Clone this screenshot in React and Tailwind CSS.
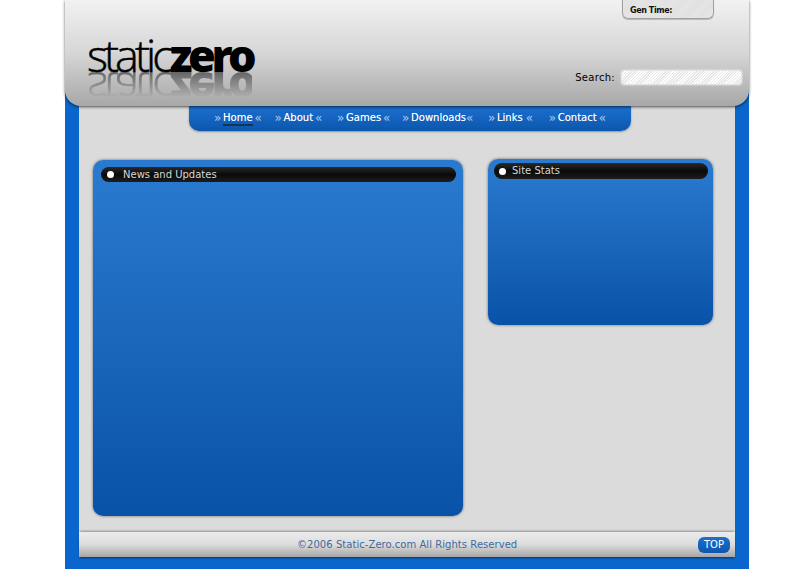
const navItems = [
  { label: "Home", cls: "ml-[25px]", gap: "ml-[2px]", active: true },
  { label: "About", cls: "ml-[12px]", gap: "ml-[2px]" },
  { label: "Games", cls: "ml-[14px]", gap: "ml-[2px]" },
  { label: "Downloads", cls: "ml-[11px]", gap: "ml-0" },
  { label: "Links", cls: "ml-[14px]", gap: "ml-[3px]" },
  { label: "Contact", cls: "ml-[15px]", gap: "ml-[2px]" },
];

function Logo({ className = "" }) {
  return (
    <div className={`flex h-[34px] items-end font-['Open_Sans',sans-serif] text-[45px] leading-[34px] text-black ${className}`}>
      <span className="font-light tracking-[-3.95px] [-webkit-text-stroke:0.5px_#000000]">static</span>
      <span className="font-extrabold tracking-[-4.5px]">zero</span>
    </div>
  );
}

function PanelTitle({ title, cls, textCls }) {
  return (
    <div className={`flex items-center rounded-full bg-gradient-to-b from-[#2a2a2a] via-[#0a0a0a] to-[#1c1c1c] text-[10px] leading-none text-[#d8d8d8] ${cls}`}>
      <span className="h-[7px] w-[7px] rounded-full bg-white" />
      <span className={textCls}>{title}</span>
    </div>
  );
}

export default function App() {
  return (
    <div className="h-[569px] w-[800px] overflow-hidden bg-white font-['DejaVu_Sans',sans-serif]">
      <div className="ml-[65px] h-[569px] w-[684px] bg-[#0a66cc] px-[14px]">
        <header className="relative z-20 -mx-[14px] flex h-[106px] justify-between rounded-b-[16px] bg-gradient-to-b from-[#f2f2f2] via-[#d6d6d6] to-[#a8a8a8] shadow-[0_1px_3px_rgba(0,0,0,0.65)]">
          <div className="pl-[22px] pt-[38px]">
            <Logo />
            <Logo className="-scale-y-100 [mask-image:linear-gradient(to_top,rgba(0,0,0,0.7),transparent_75%)] opacity-70" />
          </div>
          <div className="flex flex-col items-end pr-[8px]">
            <div className="mr-[27px] flex h-[19px] w-[92px] items-end rounded-b-[6px] border border-t-0 border-[#a0a0a0] bg-[repeating-linear-gradient(135deg,#e6e6e6_0px,#e6e6e6_1px,#e0e0e0_1px,#e0e0e0_2px)] pb-[3px] pl-[7px] text-[8px] font-bold leading-none tracking-[-0.4px] text-[#111] shadow-[0_1px_1px_rgba(0,0,0,0.2)]">
              Gen Time:
            </div>
            <div className="mt-[52px] flex items-center">
              <span className="mr-[7px] text-[10px] leading-none tracking-[0.3px] text-black">Search:</span>
              <div className="h-[13px] w-[119px] rounded-[2px] bg-[repeating-linear-gradient(135deg,#ffffff_0px,#ffffff_1px,#e6e6e6_1px,#e6e6e6_2px)] shadow-[0_0_2px_1px_rgba(255,255,255,0.8)]" />
            </div>
          </div>
        </header>

        <main className="h-[426px] bg-[#dbdbdb]">
          <nav className="relative z-10 ml-[110px] flex h-[25px] w-[442px] items-center rounded-b-[10px] bg-gradient-to-b from-[#1c6fd0] to-[#0b57ad] pb-[3px] pt-[1px] text-[10px] leading-none text-white shadow-[0_1px_2px_rgba(0,0,0,0.35)] [text-shadow:0_0_0.4px_rgba(255,255,255,0.6)]">
            {navItems.map((item) => (
              <div key={item.label} className={`flex items-center ${item.cls}`}>
                <span className="w-[9px] text-[12px] text-[#a9c8ee] [text-shadow:none]">»</span>
                <span className={item.active ? "-mb-[3px] border-b-2 border-[#16335a] pb-[1px]" : ""}>{item.label}</span>
                <span className={`w-[8px] text-[12px] text-[#a9c8ee] [text-shadow:none] ${item.gap}`}>«</span>
              </div>
            ))}
          </nav>

          <div className="flex items-start pl-[14px] pt-[28px]">
            <section className="mt-[1px] h-[356px] w-[370px] rounded-[10px] bg-gradient-to-b from-[#2a7bd0] to-[#0853a8] px-[8px] pt-[7px] shadow-[0_0_3px_rgba(0,0,0,0.55)]">
              <PanelTitle title="News and Updates" cls="h-[15px] w-[355px] pl-[6px]" textCls="ml-[9px]" />
            </section>
            <section className="ml-[25px] h-[166px] w-[225px] rounded-[10px] bg-gradient-to-b from-[#2a7bd0] to-[#0853a8] pl-[6px] pt-[4px] shadow-[0_0_3px_rgba(0,0,0,0.55)]">
              <PanelTitle title="Site Stats" cls="h-[16px] w-[214px] pl-[5px]" textCls="ml-[6px]" />
            </section>
          </div>
        </main>

        <footer className="flex h-[25px] items-center bg-gradient-to-b from-[#ececec] via-[#dcdcdc] to-[#a6a6a6] shadow-[0_-2px_2px_-1px_rgba(0,0,0,0.35),0_2px_2px_-1px_rgba(0,0,0,0.5)]">
          <span className="ml-[218px] text-[10px] leading-none tracking-[0.05px] text-[#3d6a9e]">©2006 Static-Zero.com All Rights Reserved</span>
          <span className="ml-auto mr-[5px] flex h-[16px] w-[32px] items-center justify-center rounded-[6px] bg-gradient-to-b from-[#1c6fd0] to-[#0b57ad] text-[10px] leading-none text-white">TOP</span>
        </footer>
      </div>
    </div>
  );
}
